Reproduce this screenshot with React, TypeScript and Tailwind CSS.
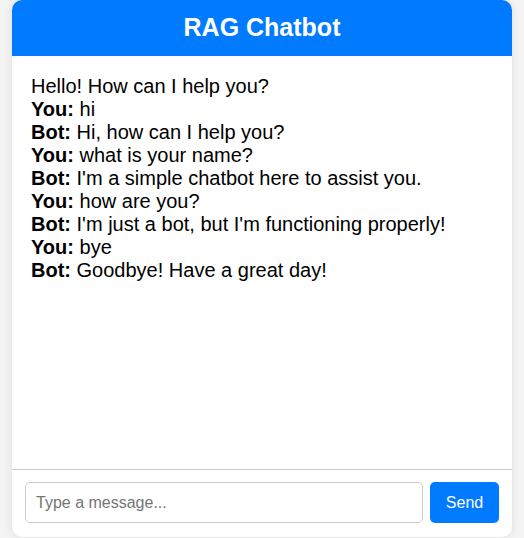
import { useState } from 'react';

type Message = { sender?: 'You' | 'Bot'; text: string };

const initialMessages: Message[] = [
  { text: 'Hello! How can I help you?' },
  { sender: 'You', text: 'hi' },
  { sender: 'Bot', text: 'Hi, how can I help you?' },
  { sender: 'You', text: 'what is your name?' },
  { sender: 'Bot', text: "I'm a simple chatbot here to assist you." },
  { sender: 'You', text: 'how are you?' },
  { sender: 'Bot', text: "I'm just a bot, but I'm functioning properly!" },
  { sender: 'You', text: 'bye' },
  { sender: 'Bot', text: 'Goodbye! Have a great day!' },
];

export default function App() {
  const [messages] = useState<Message[]>(initialMessages);
  const [input, setInput] = useState('');

  return (
    <div className="flex min-h-[538px] justify-center bg-[#f4f4f4] font-['Liberation_Sans',Arial,sans-serif]">
      <div className="flex h-[537px] w-[500px] flex-col overflow-hidden rounded-[10px] bg-white shadow-[0_0_10px_rgba(0,0,0,0.1)]">
        <div className="flex h-[56px] items-center justify-center bg-[#007bff]">
          <h1 className="text-[25px] font-bold text-white">RAG Chatbot</h1>
        </div>

        <div className="flex-1 overflow-y-auto py-[19px] pl-[19px] pr-[20px] text-[20px] leading-[23px] text-black">
          {messages.map((m, i) => (
            <div key={i}>
              {m.sender && <strong>{m.sender}:</strong>} {m.text}
            </div>
          ))}
        </div>

        <div className="flex gap-[7px] border-t border-[#ccc] px-[13px] pb-[14px] pt-[12px]">
          <input
            value={input}
            onChange={(e) => setInput(e.target.value)}
            placeholder="Type a message..."
            className="h-[41px] flex-1 rounded-[5px] border border-[#ccc] px-[10px] text-[16px] text-black outline-none placeholder:text-[#757575]"
          />
          <button className="h-[41px] w-[69px] rounded-[5px] bg-[#007bff] text-[16px] text-white">
            Send
          </button>
        </div>
      </div>
    </div>
  );
}
